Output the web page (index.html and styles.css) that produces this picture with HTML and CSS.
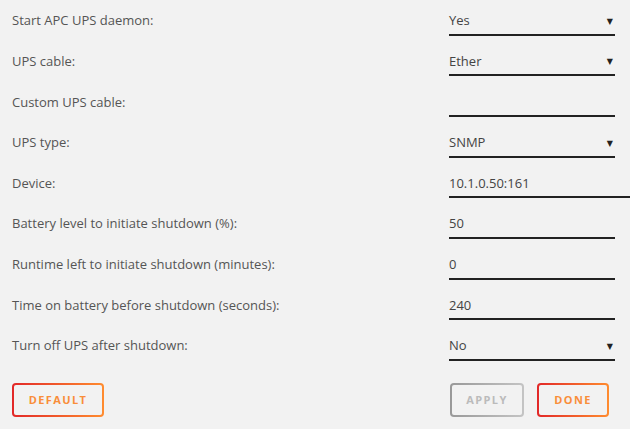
FILE: index.html
```html
<!DOCTYPE html>
<html lang="en">
<head>
  <meta charset="UTF-8">
  <title>UPS Settings</title>
  <link rel="stylesheet" href="styles.css">
</head>
<body>
  <form class="settings">
    <div class="row">
      <span class="label">Start APC UPS daemon:</span>
      <div class="field select"><span>Yes</span><i class="arrow">&#9660;</i></div>
    </div>
    <div class="row">
      <span class="label">UPS cable:</span>
      <div class="field select"><span>Ether</span><i class="arrow">&#9660;</i></div>
    </div>
    <div class="row">
      <span class="label">Custom UPS cable:</span>
      <div class="field"><span></span></div>
    </div>
    <div class="row">
      <span class="label">UPS type:</span>
      <div class="field select"><span>SNMP</span><i class="arrow">&#9660;</i></div>
    </div>
    <div class="row">
      <span class="label">Device:</span>
      <div class="field wide"><span>10.1.0.50:161</span></div>
    </div>
    <div class="row">
      <span class="label">Battery level to initiate shutdown (%):</span>
      <div class="field"><span>50</span></div>
    </div>
    <div class="row">
      <span class="label">Runtime left to initiate shutdown (minutes):</span>
      <div class="field"><span>0</span></div>
    </div>
    <div class="row">
      <span class="label">Time on battery before shutdown (seconds):</span>
      <div class="field"><span>240</span></div>
    </div>
    <div class="row">
      <span class="label">Turn off UPS after shutdown:</span>
      <div class="field select"><span>No</span><i class="arrow">&#9660;</i></div>
    </div>

    <div class="actions">
      <button type="button" class="btn btn-default">Default</button>
      <div class="right-btns">
        <button type="button" class="btn btn-apply disabled">Apply</button>
        <button type="button" class="btn btn-done">Done</button>
      </div>
    </div>
  </form>
</body>
</html>
```
FILE: styles.css
```css
body {
  margin: 0;
  padding: 0;
  background: #f2f2f2;
  font-family: 'Open Sans', 'DejaVu Sans', sans-serif;
  font-size: 13px;
  color: #555;
  overflow: hidden;
}

.settings {
  padding: 0 0 0 12px;
}

.row {
  display: flex;
  align-items: center;
  height: 40.625px;
}

.label {
  width: 437px;
  flex-shrink: 0;
}

.field {
  display: flex;
  align-items: center;
  justify-content: space-between;
  width: 166px;
  height: 29px;
  margin-top: 2px;
  border-bottom: 2px solid #222;
  box-sizing: border-box;
  color: #444;
  flex-shrink: 0;
}
.field.wide {
  width: 200px;
}

.arrow {
  font-style: normal;
  font-size: 8px;
  color: #222;
  margin-right: 2px;
}

/* Buttons */
.actions {
  display: flex;
  justify-content: space-between;
  margin-top: 17px;
  padding-right: 21px;
}
.right-btns {
  display: flex;
  gap: 13px;
}

.btn {
  height: 34px;
  padding: 0;
  font-family: 'Open Sans', sans-serif;
  font-size: 11px;
  font-weight: bold;
  letter-spacing: 1.4px;
  text-transform: uppercase;
  color: #f98e3a;
  border: 2px solid transparent;
  border-radius: 4px;
  background: linear-gradient(#f2f2f2, #f2f2f2) padding-box,
              linear-gradient(90deg, #e22828, #ff8c2f) border-box;
  cursor: pointer;
}
.btn-default { width: 92px; }
.btn-apply { width: 74px; }
.btn-done { width: 72px; }

.btn.disabled {
  color: #bbb;
  background: linear-gradient(#f2f2f2, #f2f2f2) padding-box,
              linear-gradient(90deg, #999, #c4c4c4) border-box;
  cursor: default;
}
```
